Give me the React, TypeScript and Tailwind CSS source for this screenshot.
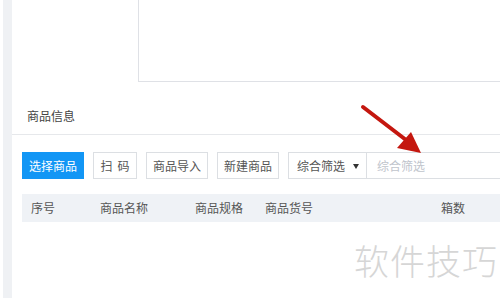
import React from "react";

const font = { fontFamily: '"Noto Sans CJK SC", "Noto Sans", sans-serif' };

export default function App() {
  return (
    <div className="relative flex h-[298px] w-[500px] overflow-hidden bg-white" style={font}>
      <div className="w-[3px] shrink-0 bg-white" />
      <div className="w-[9px] shrink-0 bg-[#eff1f4]" />
      <div className="flex min-w-0 flex-1 flex-col">
        {/* top textarea remnant */}
        <div className="h-[82px] shrink-0 pl-[126px]">
          <div className="h-full border-b border-l border-[#dfe1e6]" />
        </div>
        {/* section title */}
        <div className="h-[53px] shrink-0 border-b border-[#e6e8eb] pl-[15px] pt-[20px]">
          <span className="text-[12px] leading-[16px] text-[#444]">商品信息</span>
        </div>
        {/* toolbar */}
        <div className="mt-[17px] flex h-[27px] gap-[9px] pl-[10px]">
          <button className="w-[62px] shrink-0 bg-[#1296f5] text-[12px] text-white">选择商品</button>
          <button className="w-[44px] shrink-0 border border-[#dcdfe3] text-[12px] text-[#555]">扫<span className="inline-block w-[5px]" />码</button>
          <button className="w-[62px] shrink-0 border border-[#dcdfe3] text-[12px] text-[#555]">商品导入</button>
          <button className="w-[62px] shrink-0 border border-[#dcdfe3] text-[12px] text-[#555]">新建商品</button>
          <div className="flex min-w-0 flex-1 border border-r-0 border-[#dcdfe3]">
            <div className="flex w-[78px] shrink-0 items-center border-r border-[#dcdfe3] pl-[8px] text-[12px] text-[#555]">
              <span>综合筛选</span>
              <span className="ml-[8px] mt-[1px] h-0 w-0 border-l-[3px] border-r-[3px] border-t-[5px] border-l-transparent border-r-transparent border-t-[#333]" />
            </div>
            <div className="flex items-center pl-[10px] text-[12px] text-[#c0c4cc]">综合筛选</div>
          </div>
        </div>
        {/* table header */}
        <div className="ml-[10px] mt-[15px] flex h-[28px] items-center bg-[#eff2f6] text-[12px] text-[#555]">
          <span className="absolute left-[31px]">序号</span>
          <span className="absolute left-[100px]">商品名称</span>
          <span className="absolute left-[195px]">商品规格</span>
          <span className="absolute left-[265px]">商品货号</span>
          <span className="absolute left-[441px]">箱数</span>
        </div>
      </div>

      {/* watermark */}
      <div className="pointer-events-none absolute left-[354px] top-[236px] text-[35px] font-light leading-[48px] tracking-[1px] text-[#d6d6d6]">
        软件技巧
      </div>

      {/* red arrow */}
      <svg className="pointer-events-none absolute left-0 top-0" width="500" height="298">
        <line x1="363" y1="107" x2="410" y2="143" stroke="#c4170f" strokeWidth="4" strokeLinecap="round" />
        <polygon points="421,153 411,132 397,148" fill="#c4170f" />
      </svg>
    </div>
  );
}
